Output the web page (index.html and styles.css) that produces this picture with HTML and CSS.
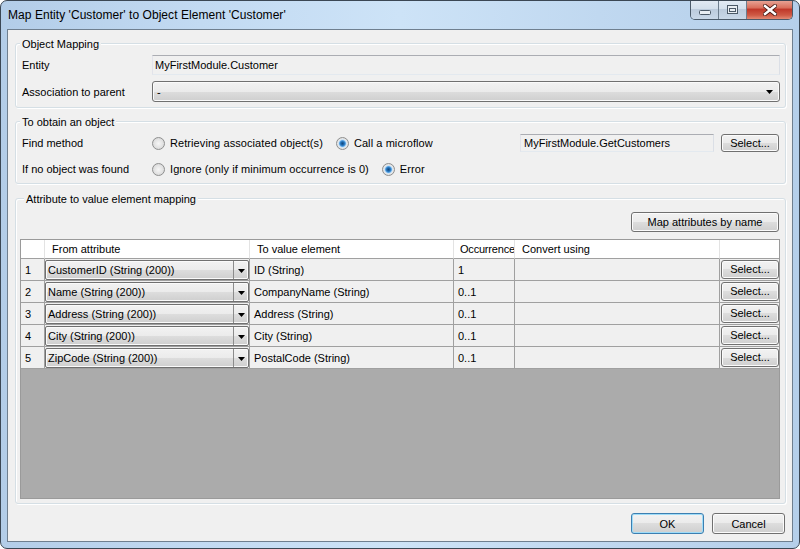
FILE: index.html
```html
<!DOCTYPE html>
<html>
<head>
<meta charset="utf-8">
<link rel="stylesheet" href="styles.css">
</head>
<body>
<div class="window">
  <div class="titlebar">
    <span class="title">Map Entity 'Customer' to Object Element 'Customer'</span>
    <div class="caption">
      <span class="cb min"><svg width="12" height="5" viewBox="0 0 12 5"><rect x="0.5" y="0.5" width="11" height="4" rx="1" fill="#e9eef3" stroke="#4b5967"/></svg></span>
      <span class="cb max"><svg width="11" height="9" viewBox="0 0 11 9"><rect x="0.5" y="0.5" width="10" height="8" fill="#e9eef3" stroke="#4b5967"/><rect x="2.5" y="3.5" width="6" height="3" fill="none" stroke="#4b5967"/></svg></span>
      <span class="cb close"><svg width="14" height="12" viewBox="0 0 14 12"><path d="M2 2L12 10M12 2L2 10" stroke="#4a1c14" stroke-width="4.2" stroke-linecap="square"/><path d="M2 2L12 10M12 2L2 10" stroke="#ffffff" stroke-width="2.4" stroke-linecap="square"/></svg></span>
    </div>
  </div>
  <div class="client">
    <div class="group g1">
      <div class="group-title">Object Mapping</div>
      <div class="form-grid">
        <span class="label">Entity</span>
        <div class="textbox">MyFirstModule.Customer</div>
        <span class="label">Association to parent</span>
        <div class="combo-btn"><span>-</span><svg class="arrow" width="7" height="4" viewBox="0 0 7 4"><path d="M0 0h7L3.5 4z" fill="#000"/></svg></div>
      </div>
    </div>

    <div class="group g2">
      <div class="group-title">To obtain an object</div>
      <div class="opt-row r1">
        <span class="label w130">Find method</span>
        <span class="radio"></span><span class="rtext">Retrieving associated object(s)</span>
        <span class="radio checked sp"></span><span class="rtext">Call a microflow</span>
        <div class="textbox small">MyFirstModule.GetCustomers</div>
        <div class="btn sel">Select...</div>
      </div>
      <div class="opt-row r2">
        <span class="label w130">If no object was found</span>
        <span class="radio"></span><span class="rtext">Ignore (only if minimum occurrence is 0)</span>
        <span class="radio checked sp"></span><span class="rtext">Error</span>
      </div>
    </div>

    <div class="group g3">
      <div class="group-title">Attribute to value element mapping</div>
      <div class="map-row"><div class="btn map">Map attributes by name</div></div>
      <div class="grid">
        <div class="grid-table">
          <div class="hc"></div><div class="hc">From attribute</div><div class="hc">To value element</div><div class="hc occ">Occurrence</div><div class="hc">Convert using</div><div class="hc last"></div>

          <div class="c">1</div><div class="c cc"><div class="cell-combo"><span class="cc-text">CustomerID (String (200))</span><span class="cc-arrow"><svg width="7" height="4" viewBox="0 0 7 4"><path d="M0 0h7L3.5 4z" fill="#000"/></svg></span></div></div><div class="c">ID (String)</div><div class="c">1</div><div class="c"></div><div class="c last"><div class="btn rsel">Select...</div></div>

          <div class="c">2</div><div class="c cc"><div class="cell-combo"><span class="cc-text">Name (String (200))</span><span class="cc-arrow"><svg width="7" height="4" viewBox="0 0 7 4"><path d="M0 0h7L3.5 4z" fill="#000"/></svg></span></div></div><div class="c">CompanyName (String)</div><div class="c">0..1</div><div class="c"></div><div class="c last"><div class="btn rsel">Select...</div></div>

          <div class="c">3</div><div class="c cc"><div class="cell-combo"><span class="cc-text">Address (String (200))</span><span class="cc-arrow"><svg width="7" height="4" viewBox="0 0 7 4"><path d="M0 0h7L3.5 4z" fill="#000"/></svg></span></div></div><div class="c">Address (String)</div><div class="c">0..1</div><div class="c"></div><div class="c last"><div class="btn rsel">Select...</div></div>

          <div class="c">4</div><div class="c cc"><div class="cell-combo"><span class="cc-text">City (String (200))</span><span class="cc-arrow"><svg width="7" height="4" viewBox="0 0 7 4"><path d="M0 0h7L3.5 4z" fill="#000"/></svg></span></div></div><div class="c">City (String)</div><div class="c">0..1</div><div class="c"></div><div class="c last"><div class="btn rsel">Select...</div></div>

          <div class="c">5</div><div class="c cc"><div class="cell-combo"><span class="cc-text">ZipCode (String (200))</span><span class="cc-arrow"><svg width="7" height="4" viewBox="0 0 7 4"><path d="M0 0h7L3.5 4z" fill="#000"/></svg></span></div></div><div class="c">PostalCode (String)</div><div class="c">0..1</div><div class="c"></div><div class="c last"><div class="btn rsel">Select...</div></div>
        </div>
      </div>
    </div>

    <div class="footer">
      <div class="btn dlg default">OK</div>
      <div class="btn dlg">Cancel</div>
    </div>
  </div>
</div>
</body>
</html>
```

FILE: styles.css
```css
* { box-sizing: border-box; }

body {
  margin: 0;
  background: #ffffff;
  font-family: "Liberation Sans", Arial, sans-serif;
  font-size: 11px;
  color: #000;
}

.window {
  width: 800px;
  height: 549px;
  border: 1px solid #3b4754;
  border-radius: 7px;
  background: linear-gradient(90deg, #b3cde8 0%, #c2daf2 25%, #cde3f7 50%, #c0d8f0 75%, #b5cfea 100%);
  display: flex;
  flex-direction: column;
  overflow: hidden;
}

.titlebar {
  height: 28px;
  flex: none;
  display: flex;
  align-items: flex-start;
}

.title {
  font-size: 12px;
  line-height: 28px;
  padding-left: 7px;
  letter-spacing: 0.05px;
  color: #000;
}

.caption {
  margin-left: auto;
  margin-right: 6px;
  margin-top: -1px;
  height: 20px;
  display: flex;
  border: 1px solid #4b5a69;
  border-top: none;
  border-radius: 0 0 5px 5px;
  overflow: hidden;
}

.cb {
  height: 19px;
  display: flex;
  align-items: center;
  justify-content: center;
}

.cb.min, .cb.max {
  background: linear-gradient(#e3ebf4 0%, #d4e0ec 45%, #bccbdc 50%, #c9d8e8 100%);
  border-right: 1px solid #6d7d8d;
}

.cb.min { width: 28px; padding-top: 5px; }
.cb.max { width: 28px; }

.cb.close {
  width: 45px;
  background: linear-gradient(#e9a99b 0%, #d9705d 40%, #c0392a 50%, #cf5a45 80%, #e38a74 100%);
}

.client {
  margin: 0 6px;
  height: 513px;
  flex: none;
  border: 1px solid #6f7f8f;
  background: #f0f0f0;
  padding: 0 6px 0 7px;
  display: flex;
  flex-direction: column;
}

.group {
  border: 1px solid #d5dfe5;
  border-radius: 3px;
  box-shadow: inset 1px 1px 0 #ffffff, 1px 1px 0 #ffffff;
}

.group-title {
  width: fit-content;
  margin: -7px 0 -7px 4px;
  padding: 0 2px;
  line-height: 14px;
  height: 14px;
  background: #f0f0f0;
}

.g1 { margin-top: 13px; }
.g2 { margin-top: 13px; }
.g3 { margin-top: 14px; padding: 0 5px 4px 4px; }

.form-grid {
  display: grid;
  grid-template-columns: 130px 1fr;
  row-gap: 6px;
  align-items: center;
  padding: 11px 5px 5px 6px;
}

.textbox {
  height: 20px;
  border: 1px solid;
  border-color: #abadb3 #dbdfe6 #e3e9ef #e2e3ea;
  background: #f0f0f0;
  padding-left: 2px;
  line-height: 18px;
  white-space: nowrap;
}

.textbox.small {
  height: 18px;
  line-height: 16px;
  width: 194px;
  margin-left: auto;
  padding-left: 3px;
}

.combo-btn {
  height: 21px;
  border: 1px solid #707070;
  border-radius: 3px;
  background: linear-gradient(#f2f2f2 0%, #ebebeb 50%, #dddddd 50%, #cfcfcf 100%);
  box-shadow: inset 0 0 0 1px #fafafa;
  display: flex;
  align-items: center;
  padding: 0 6px 0 4px;
}

.combo-btn .arrow { margin-left: auto; }

.opt-row {
  display: flex;
  align-items: center;
  height: 18px;
  padding: 0 6px 0 6px;
}

.opt-row.r1 { margin-top: 12px; }
.opt-row.r2 { margin-top: 8px; margin-bottom: 5px; }

.w130 { width: 130px; flex: none; }

.radio {
  width: 13px;
  height: 13px;
  flex: none;
  border-radius: 50%;
  border: 1px solid #8e8f8f;
  background: radial-gradient(circle at 50% 50%, #f6f6f6 0, #e4e4e4 50%, #cfcfcf 100%);
}

.radio.checked {
  background: radial-gradient(circle at 50% 50%, #14497e 0, #1f6cb3 1.8px, #5ba5e4 3px, #c6e0f6 3.8px, #eaeaea 4.6px, #d4d4d4 6.5px);
}

.radio.sp { margin-left: 13px; }

.rtext { margin-left: 5px; white-space: nowrap; letter-spacing: 0.08px; }

.btn {
  border: 1px solid #707070;
  border-radius: 3px;
  background: linear-gradient(#f2f2f2 0%, #ebebeb 50%, #dddddd 50%, #cfcfcf 100%);
  box-shadow: inset 0 0 0 1px #fbfbfb;
  display: flex;
  align-items: center;
  justify-content: center;
  white-space: nowrap;
}

.btn.sel { width: 58px; height: 18px; margin-left: 7px; }

.map-row {
  display: flex;
  justify-content: flex-end;
  padding-top: 13px;
  padding-right: 1px;
}

.btn.map { width: 148px; height: 20px; }

.grid {
  margin-top: 7px;
  height: 260px;
  border: 1px solid #9a9a9a;
  background: #ababab;
}

.grid-table {
  display: grid;
  grid-template-columns: 24px 205px 204px 61px 205px 59px;
  grid-template-rows: 19px;
  grid-auto-rows: 22px;
}

.hc {
  background: #ffffff;
  border-right: 1px solid #e3e3e3;
  border-bottom: 1px solid #a0a0a0;
  padding-left: 7px;
  line-height: 18px;
  white-space: nowrap;
  overflow: hidden;
}

.hc.occ { padding-left: 6px; letter-spacing: -0.2px; }

.hc.last, .c.last { border-right: none; }

.c {
  background: #f0f0f0;
  border-right: 1px solid #a0a0a0;
  border-bottom: 1px solid #a0a0a0;
  padding-left: 4px;
  line-height: 22px;
  white-space: nowrap;
  overflow: hidden;
}

.c.cc { padding: 1px 0 0 0; }

.cell-combo {
  height: 20px;
  display: flex;
  border: 1px solid #707070;
  border-radius: 2px;
  background: linear-gradient(#f2f2f2 0%, #ebebeb 50%, #dddddd 50%, #cfcfcf 100%);
  box-shadow: inset 0 0 0 1px #fafafa;
}

.cc-text {
  flex: 1;
  padding-left: 2px;
  line-height: 18px;
}

.cc-arrow {
  width: 15px;
  flex: none;
  border-left: 1px solid #8c8c8c;
  display: flex;
  align-items: center;
  justify-content: center;
  padding-top: 1px;
}

.c.last { padding: 1px 0 0 1px; }

.btn.rsel { width: 58px; height: 19px; line-height: 17px; }

.footer {
  display: flex;
  justify-content: flex-end;
  gap: 8px;
  margin-top: 9px;
  padding-right: 1px;
}

.btn.dlg { width: 73px; height: 21px; }

.btn.default {
  border-color: #3c7fb1;
  box-shadow: inset 0 0 0 1px #9fdcf8;
}
```
